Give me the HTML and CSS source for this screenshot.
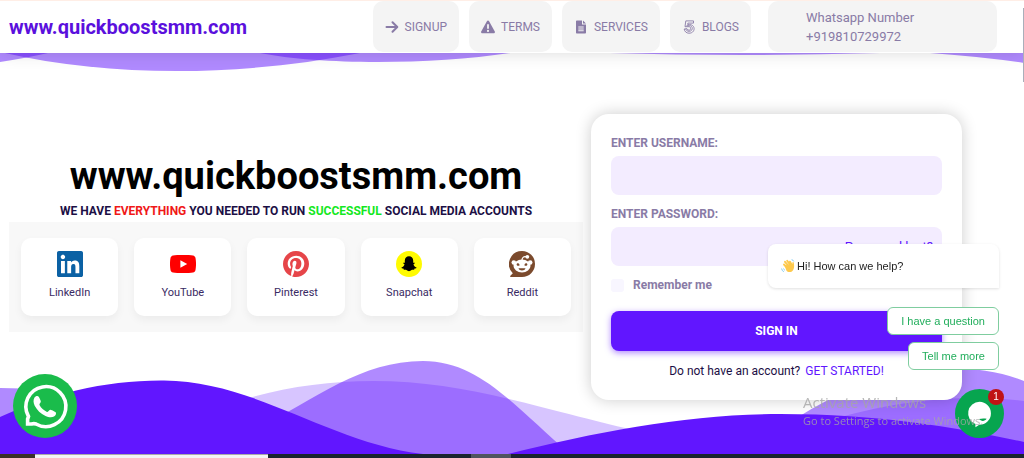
FILE: index.html
```html
<!DOCTYPE html>
<html lang="en">
<head>
    <meta charset="UTF-8">
    <meta name="viewport" content="width=device-width, initial-scale=1.0">
    <title>www.quickboostsmm.com</title>
    <link rel="stylesheet" href="styles.css">
</head>
<body>

    <!-- Navbar -->
    <header class="navbar">
        <a class="brand" href="#">www.quickboostsmm.com</a>
        <nav class="nav-links">
            <a class="nav-link" href="#">
                <svg class="nav-icon" viewBox="0 0 14 14"><path d="M1.5 7h10.5M7.5 2.2L12.3 7l-4.8 4.8" fill="none" stroke="currentColor" stroke-width="2" stroke-linecap="round" stroke-linejoin="round"/></svg>
                Signup
            </a>
            <a class="nav-link" href="#">
                <svg class="nav-icon" viewBox="0 0 14 14"><path fill-rule="evenodd" d="M7 .6c.5 0 .9.3 1.1.6l5.7 10.2c.5.9-.1 1.9-1.1 1.9H1.300c-1 0-1.600-1-1.100-1.900L5.900 1.200C6.100.9 6.500.6 7 .6zM6.100 4.200v4.600h1.800V4.200zM7 9.800a1.100 1.100 0 1 0 0 2.200 1.100 1.100 0 0 0 0-2.200z"/></svg>
                Terms
            </a>
            <a class="nav-link" href="#">
                <svg class="nav-icon" viewBox="0 0 14 14"><path fill-rule="evenodd" d="M2 1.500C2 .9 2.500.500 3 .500h5v4h4v8c0 .600-.500 1-1 1H3c-.600 0-1-.400-1-1zM9 .500L12 3.600H9zM4.300 6.500v1h5.400v-1zM4.300 8.400v1h5.400v-1zM4.300 10.300v1h5.400v-1z"/></svg>
                Services
            </a>
            <a class="nav-link" href="#">
                <svg class="nav-icon" viewBox="0 0 14 14"><g fill="none" stroke="currentColor" stroke-width=".9"><path d="M11.500.900H3.800L3 6.700h4c2.200 0 2.200 3.500 0 3.500-1.100 0-1.800-.600-2-1.500l-2.800.300c.300 2.500 2.200 4.200 4.800 4.200 6.700 0 6.700-8.600.600-8.600H5.700l.200-1.500h5.600z"/><path d="M4.500 5.700h3c3.800 0 3.800 5.600-.400 5.600-1.900 0-2.900-.900-3.300-2.200"/></g></svg>
                Blogs
            </a>
            <a class="nav-link nav-contact" href="#">Whatsapp Number<br>+919810729972</a>
        </nav>
    </header>

    <main class="hero">
        <!-- Background waves -->
        <svg class="waves waves-top" viewBox="0 0 1024 20" preserveAspectRatio="none" aria-hidden="true">
            <path d="M0 0H48Q26 5 0 9Z"/>
            <path d="M5 0C110 24 240 24 360 0Z"/>
            <path d="M260 0C320 12 430 12 510 0Z"/>
            <path d="M610 0Q740 4 880 0H930Q985 4 1024 10V0Z"/>
        </svg>
        <svg class="waves waves-bottom" viewBox="0 354 1024 100" preserveAspectRatio="none" aria-hidden="true">
            <path class="wave-light" d="M220 454V408C265 390 320 381 373 381C470 381 540 410 660 436L700 454ZM780 454V440C830 415 900 400 965 398Q1000 398 1024 401V454Z"/>
            <path class="wave-mid" d="M0 388Q45 388 90 397L140 454H0ZM200 454C295 420 345 361 423 361C480 361 515 407 570 454ZM740 454C795 420 860 369 940 368Q990 367 1024 381V454Z"/>
            <path class="wave-solid" d="M0 417C50 394 105 380 164 380.500C255 381 330 443 423 454H0ZM508 454C600 431 690 414 780 414C880 414 960 428 1024 442V454Z"/>
        </svg>

        <!-- Intro -->
        <section class="intro">
            <h1>www.quickboostsmm.com</h1>
            <p class="tagline">WE HAVE <span class="red">EVERYTHING</span> YOU NEEDED TO RUN <span class="green">SUCCESSFUL</span> SOCIAL MEDIA ACCOUNTS</p>
            <div class="socials">
                <div class="social-card">
                    <svg class="social-icon" viewBox="0 0 448 448" fill="#0b61a4"><path d="M416 0H31.900C14.300 0 0 14.500 0 32.300v383.400C0 433.500 14.300 448 31.900 448H416c17.600 0 32-14.500 32-32.300V32.300C448 14.500 433.600 0 416 0zM135.400 384H69V170.200h66.500V384zm-33.200-243c-21.300 0-38.500-17.300-38.500-38.500S80.900 64 102.200 64c21.200 0 38.500 17.300 38.500 38.500 0 21.300-17.200 38.500-38.500 38.500zm282.100 243h-66.400V280c0-24.800-.500-56.700-34.500-56.700-34.600 0-39.900 27-39.900 54.900V384h-66.400V170.200h63.700v29.200h.900c8.900-16.800 30.600-34.500 62.900-34.500 67.200 0 79.700 44.300 79.700 101.900V384z"/></svg>
                    <span>LinkedIn</span>
                </div>
                <div class="social-card">
                    <svg class="social-icon" viewBox="0 0 26 26"><path fill="#f00" d="M13 4c4 0 8 .100 10 .600 1.300.300 2.200 1.200 2.500 2.500.700 3.500.700 8.300 0 11.800-.300 1.300-1.200 2.200-2.500 2.500-4 .800-16 .800-20 0-1.300-.300-2.200-1.200-2.500-2.500-.700-3.500-.700-8.300 0-11.800C.8 5.800 1.700 4.900 3 4.600 5 4.100 9 4 13 4z"/><path fill="#fff" d="M10.400 9.200v7.600l6.800-3.800z"/></svg>
                    <span>YouTube</span>
                </div>
                <div class="social-card">
                    <svg class="social-icon" viewBox="0 8 496 496" fill="#e64549"><path d="M496 256c0 137-111 248-248 248-25.600 0-50.200-3.900-73.400-11.100 10.100-16.500 25.200-43.500 30.800-65 3-11.600 15.400-59 15.400-59 8.100 15.400 31.700 28.500 56.800 28.500 74.800 0 128.700-68.800 128.700-154.300 0-81.900-66.900-143.200-152.900-143.200-107 0-163.900 71.800-163.900 150.100 0 36.400 19.400 81.700 50.300 96.100 4.700 2.200 7.200 1.200 8.300-3.300.800-3.400 5-20.300 6.900-28.100.600-2.500.300-4.700-1.700-7.100-10.100-12.500-18.300-35.300-18.300-56.600 0-54.700 41.400-107.600 112-107.600 60.900 0 103.600 41.500 103.600 100.900 0 67.100-33.900 113.600-78 113.600-24.300 0-42.600-20.100-36.700-44.800 7-29.500 20.500-61.300 20.500-82.600 0-19-10.200-34.900-31.400-34.900-24.900 0-44.900 25.700-44.900 60.200 0 22 7.400 36.800 7.400 36.800s-24.500 103.800-29 123.200c-5 21.400-3 51.600-.900 71.200C65.400 450.900 0 361.100 0 256 0 119 111 8 248 8s248 111 248 248z"/></svg>
                    <span>Pinterest</span>
                </div>
                <div class="social-card">
                    <svg class="social-icon" viewBox="0 0 26 26"><circle cx="13" cy="13" r="13" fill="#fffb00"/><path d="M13 5.300c2.500 0 4.200 1.700 4.200 4.200v2.200c.500.200 1.100-.300 1.600.100.500.700-.900 1.100-1.300 1.500.200 1.500 1.400 2.700 3 3.100.300.600-.800 1-1.900 1.200-.300.400-.100 1-.600 1.100-.900 0-1.700-.200-2.500.300-.900.600-1.500 1.200-2.500 1.200s-1.600-.600-2.500-1.200c-.800-.500-1.600-.300-2.500-.300-.500-.100-.300-.700-.600-1.100-1.100-.200-2.200-.600-1.900-1.200 1.600-.400 2.800-1.600 3-3.100-.400-.400-1.800-.800-1.300-1.500.500-.400 1.100.100 1.600-.100V9.500c0-2.500 1.700-4.200 4.200-4.200z"/></svg>
                    <span>Snapchat</span>
                </div>
                <div class="social-card">
                    <svg class="social-icon" viewBox="0 0 26 26"><path fill="#7b4a2d" d="M13 0a13 13 0 1 1 0 26H1.800c-.800 0-1-.800-.400-1.300l2.400-2.500A13 13 0 0 1 13 0z"/><ellipse cx="13" cy="15" rx="8.500" ry="6.500" fill="#fff"/><circle cx="4.800" cy="11.500" r="2.300" fill="#fff"/><circle cx="21.200" cy="11.500" r="2.300" fill="#fff"/><circle cx="18.300" cy="5.800" r="1.900" fill="#fff"/><path d="M13 9c.100-2.300 1.500-3.700 4-3.200" fill="none" stroke="#fff" stroke-width="1.200"/><path fill="#7b4a2d" d="M7.600 13.500c.200-1.600 2.500-1.600 2.900.400.100 1.200-2.900 1.400-2.900-.400zM18.400 13.500c-.200-1.600-2.500-1.600-2.900.400-.100 1.200 2.900 1.400 2.900-.400zM9.500 17.200h7c-.700 3-6.300 3-7 0z"/></svg>
                    <span>Reddit</span>
                </div>
            </div>
        </section>

        <!-- Login form -->
        <form class="login-card">
            <label for="username">ENTER USERNAME:</label>
            <input type="text" id="username" class="field">
            <label for="password">ENTER PASSWORD:</label>
            <div class="password-box">
                <input type="password" id="password" class="field">
                <a class="lost-link" href="#">Password lost?</a>
            </div>
            <div class="remember">
                <input type="checkbox" id="remember">
                <label for="remember">Remember me</label>
            </div>
            <button type="button" class="signin-btn">SIGN IN</button>
            <p class="register">Do not have an account? <a href="#">GET STARTED!</a></p>
        </form>
    </main>

    <!-- Taskbar -->
    <footer class="taskbar">
        <span class="task-start"></span>
        <span class="task-search"></span>
        <span class="task-active"></span>
    </footer>

    <span class="scroll-thumb"></span>

    <a class="whatsapp" href="#" aria-label="WhatsApp">
        <svg viewBox="0 0 64 64"><circle cx="32" cy="32" r="32" fill="#1abc4b"/><path d="M15.500 42.500A20 20 0 1 1 23 50Q21 49.300 18.500 50H14.600V45Q15.200 43.500 15.500 42.500z" fill="none" stroke="#fff" stroke-width="3.600"/><path fill="#fff" d="M21.500 23.600c.800-1.300 3.200-2.300 4.400-.700.700 1.100 1.600 3.200 1.900 4.400.300 1.500-1.900 2.400-1.300 3.700 1.600 3.100 4.200 5.400 7.500 6.900 1.400.600 2.200-2.500 4-2 1.200.300 3.900 1.500 4.700 2.300 1 1.200-.300 3.700-1.700 4.400-2.500 1.300-5.800.700-8.500-.600-4.900-2.300-8.500-6-10.800-10.300-1.300-2.500-1.700-5.700-.200-8.100z"/></svg>
    </a>

    <!-- Chat widget -->
    <aside class="chat">
        <div class="chat-bubble">
            <svg class="hand" viewBox="0 0 14 14" aria-hidden="true"><path d="M3 5.500L8.300 11M4 2.800L9.300 9M6.200 1.800L10.700 8M9 2.700L11.500 7.500" fill="none" stroke="#fdc94d" stroke-width="1.900" stroke-linecap="round"/><path fill="#fdc94d" d="M3.600 6.800L10.500 4.500l.900.500c-.300-1.800.900-2.600 1.400-1.300.300 2 .800 4.900-.600 7.200-2.100 3.200-5.500 2.300-6.800.500z"/><path d="M.600 9.500q.300 2.500 2.300 3.200M2.500 9.500q.300 1.200 1.300 1.700M10.600.700q1.900.300 2.200 1.800" fill="none" stroke="#7bc7ee" stroke-width=".9"/></svg>
            Hi! How can we help?
        </div>
        <button type="button" class="chip">I have a question</button>
        <button type="button" class="chip">Tell me more</button>
    </aside>
    <button type="button" class="chat-launcher" aria-label="Open chat">
        <svg viewBox="0 0 48 48"><circle cx="24" cy="24" r="24" fill="#07a54f"/><path fill="#fff" d="M24 12.500a11.300 11.300 0 1 1-.200 22.600L20 37.500v-3.200A11.300 11.300 0 0 1 24 12.500z"/><path fill="#07a54f" d="M23.500 29.500c2.500-.700 5-.700 7.500-.300-1.800 2.700-5.500 2.700-7.500.300z"/></svg>
        <span class="badge">1</span>
    </button>

    <div class="watermark">
        <p class="watermark-title">Activate Windows</p>
        <p>Go to Settings to activate Windows.</p>
    </div>

</body>
</html>
```
FILE: styles.css
```css
/* General Styles */
* {
    box-sizing: border-box;
}

body {
    margin: 0;
    min-height: 100vh;
    display: flex;
    flex-direction: column;
    font-family: Roboto, sans-serif;
    font-size: 12px;
    color: #1c0f45;
    background: #fff;
}

a {
    color: #6116ff;
    text-decoration: none;
}

h1, p {
    margin: 0;
}

/* Navbar */
.navbar {
    display: flex;
    align-items: center;
    justify-content: space-between;
    padding: 0 27px 1px 9px;
    border-top: 1px solid #ffeee6;
    background: #fff;
    box-shadow: 0 0 16px rgba(0, 0, 0, 0.15);
    position: relative;
    z-index: 1;
}

.brand {
    font-size: 20px;
    font-weight: 700;
    color: #5a10dd;
}

.nav-links {
    display: flex;
    gap: 10px;
}

.nav-link {
    display: flex;
    align-items: center;
    gap: 6px;
    height: 51px;
    padding: 0 12px;
    border-radius: 10px;
    background: #f4f4f4;
    color: #897ba6;
    text-transform: uppercase;
}

.nav-icon {
    width: 14px;
    height: 14px;
    fill: currentColor;
}

.nav-contact {
    width: 229px;
    margin-left: 7px;
    padding-left: 38px;
    font-size: 13px;
    line-height: 19px;
    text-transform: none;
}

/* Hero */
.hero {
    flex: 1;
    position: relative;
    display: grid;
    grid-template-columns: 574fr 371fr;
    gap: 8px;
    align-items: start;
    padding: 61px 62px 54px 9px;
}

.waves {
    position: absolute;
    left: 0;
    width: 100%;
    fill: #6116ff;
}

.waves-top {
    top: 0;
    height: 20px;
    fill-opacity: 0.5;
}

.waves-bottom {
    bottom: 0;
    height: 100px;
}

.wave-light {
    fill-opacity: 0.25;
}

.wave-mid {
    fill-opacity: 0.5;
}

.intro {
    position: relative;
    padding-top: 37px;
    text-align: center;
}

.intro h1 {
    font-size: 38px;
    line-height: 50px;
    font-weight: 700;
    color: #000;
}

.tagline {
    line-height: 21px;
    font-weight: 700;
}

.red {
    color: #f01818;
}

.green {
    color: #14e81e;
}

.socials {
    display: grid;
    grid-template-columns: repeat(5, 1fr);
    gap: 16px;
    padding: 16px 12px;
    background: #f8f8f8;
}

.social-card {
    display: flex;
    flex-direction: column;
    align-items: center;
    gap: 6px;
    padding: 13px 0;
    border-radius: 10px;
    background: #fff;
    box-shadow: 0 4px 8px rgba(0, 0, 0, 0.05);
    font-size: 11px;
    line-height: 20px;
    color: #392a63;
}

.social-icon {
    width: 26px;
    height: 26px;
}

/* Login form */
.login-card {
    position: relative;
    display: flex;
    flex-direction: column;
    padding: 17px 20px;
    border-radius: 18px;
    background: #fff;
    box-shadow: 0 0 16px rgba(0, 0, 0, 0.2);
}

.login-card label {
    line-height: 25px;
    font-weight: 700;
    color: #897ba6;
}

.field {
    width: 100%;
    height: 39px;
    margin-bottom: 7px;
    padding: 0 12px;
    border: none;
    border-radius: 8px;
    background: #f3ecff;
    font-size: 13px;
}

.password-box {
    position: relative;
    display: flex;
}

.lost-link {
    position: absolute;
    right: 9px;
    top: 10px;
    font-size: 13px;
    line-height: 20px;
}

.remember {
    display: flex;
    align-items: center;
    gap: 9px;
}

.remember input {
    appearance: none;
    width: 13px;
    height: 13px;
    margin: 0;
    border-radius: 3px;
    background: #f8f6ff;
}

.signin-btn {
    height: 40px;
    margin: 13px 0 8px;
    border: none;
    border-radius: 8px;
    background: #6116ff;
    box-shadow: 0 2px 6px rgba(97, 22, 255, 0.5);
    color: #fff;
    font-family: inherit;
    font-size: 12px;
    font-weight: 700;
    cursor: pointer;
}

.register {
    line-height: 24px;
    text-align: center;
}

.register a {
    margin-left: 2px;
}

/* Taskbar */
.taskbar {
    display: grid;
    grid-template-columns: 35px 233px 203px 40px;
    height: 4px;
    background: #1b2430;
}

.task-start {
    background: #3b3028;
}

.task-search {
    border-top: 1px solid #aaa;
    background: #f4f4f4;
}

.task-active {
    grid-column: 4;
    background: #50545f;
}

.scroll-thumb {
    position: absolute;
    top: 8px;
    right: 0;
    z-index: 2;
    width: 1px;
    height: 74px;
    background: #a9afba;
}

/* Floating widgets */
.whatsapp {
    position: fixed;
    left: 13px;
    bottom: 20px;
    width: 64px;
    height: 64px;
}

.chat {
    position: fixed;
    right: 25px;
    bottom: 88px;
    display: flex;
    flex-direction: column;
    align-items: flex-end;
    gap: 7px;
    font-family: "Liberation Sans", Arial, sans-serif;
    font-size: 11px;
    color: #222;
}

.chat-bubble {
    display: flex;
    align-items: center;
    gap: 2px;
    width: 231px;
    height: 44px;
    margin-bottom: 12px;
    padding: 0 13px;
    border-radius: 8px 8px 0 8px;
    background: #fff;
    box-shadow: 0 1px 3px rgba(0, 0, 0, 0.12);
}

.hand {
    width: 14px;
    height: 14px;
}

.chip {
    height: 28px;
    padding: 0 13px;
    border: 1px solid #7fcd9f;
    border-radius: 6px;
    background: #fff;
    color: #22ae5c;
    font-family: inherit;
    font-size: 11px;
    cursor: pointer;
}

.chat-launcher {
    position: fixed;
    right: 20px;
    bottom: 20px;
    width: 49px;
    height: 49px;
    padding: 0;
    border: none;
    background: none;
    cursor: pointer;
}

.badge {
    position: absolute;
    top: 0;
    right: 0;
    width: 16px;
    height: 16px;
    border-radius: 50%;
    background: #c01314;
    color: #fff;
    font-size: 10px;
    line-height: 16px;
}

.watermark {
    position: fixed;
    right: 36px;
    bottom: 28px;
    width: 185px;
    font-family: "Open Sans", sans-serif;
    font-size: 11px;
    line-height: 18px;
    color: rgba(165, 165, 165, 0.8);
    white-space: nowrap;
    pointer-events: none;
}

.watermark-title {
    font-size: 15px;
    line-height: 20px;
}
```
